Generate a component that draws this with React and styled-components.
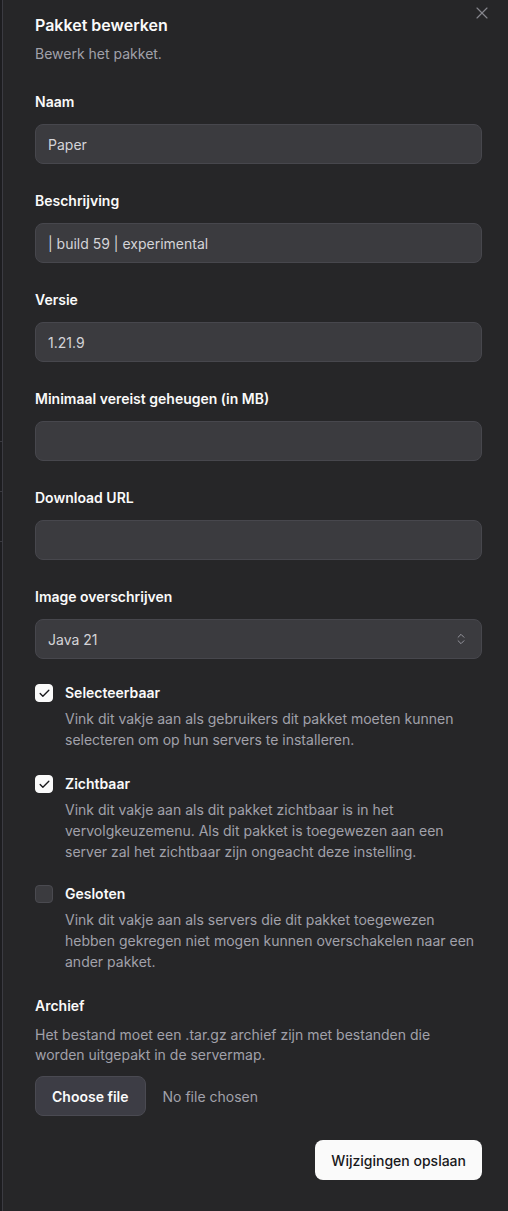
import styled, { createGlobalStyle } from "styled-components";
import { X, Check, ChevronsUpDown } from "lucide-react";

const GlobalStyle = createGlobalStyle`
  * { box-sizing: border-box; }
  html, body { margin: 0; padding: 0; background: #1d1d20; }
  body {
    font-family: Inter, "Noto Sans", "Liberation Sans", sans-serif;
    color: #fafafa;
    -webkit-font-smoothing: antialiased;
  }
`;

const Page = styled.div`
  display: flex;
  min-height: 1211px;
`;

const Backdrop = styled.div`
  width: 2px;
  flex-shrink: 0;
  background: #1d1d20;
  padding-top: 441px;
`;

const BackdropRow = styled.div`
  height: 50px;
  border-top: 1px solid #3a3a40;
`;

const Sheet = styled.div`
  position: relative;
  flex: 1;
  background: #262628;
  border-left: 1px solid #3b3b42;
  padding: 13px 26px 32px 32px;
  display: flex;
  flex-direction: column;
`;

const Close = styled.button`
  position: absolute;
  top: 3px;
  right: 16px;
  background: none;
  border: none;
  padding: 0;
  color: #85858c;
  display: flex;
`;

const Title = styled.h2`
  margin: 0;
  font-size: 16px;
  line-height: 24px;
  font-weight: 600;
  color: #fafafa;
`;

const Subtitle = styled.p`
  margin: 7px 0 0;
  font-size: 14px;
  line-height: 20px;
  color: #a1a1aa;
`;

const Form = styled.form`
  margin-top: 28px;
  display: flex;
  flex-direction: column;
`;

const Field = styled.div`
  display: flex;
  flex-direction: column;
  gap: 12px;
  margin-bottom: ${(p) => p.$mb ?? 27}px;
`;

const Label = styled.label`
  font-size: 14px;
  line-height: 20px;
  font-weight: 600;
  color: #fafafa;
`;

const Input = styled.input`
  height: 40px;
  width: 100%;
  border-radius: 8px;
  border: 1px solid #47474d;
  background: #3b3b3f;
  color: #d4d4d8;
  font-family: inherit;
  font-size: 14px;
  padding: 0 12px;
  outline: none;
`;

const Select = styled.div`
  height: 40px;
  border-radius: 8px;
  border: 1px solid #47474d;
  background: #3b3b3f;
  color: #d4d4d8;
  font-size: 14px;
  padding: 0 13px 0 12px;
  display: flex;
  align-items: center;
  justify-content: space-between;

  svg { color: #a1a1aa; }
`;

const CheckRow = styled.div`
  display: flex;
  gap: 12px;
  margin-bottom: ${(p) => p.$mb}px;
`;

const Box = styled.span`
  width: 18px;
  height: 18px;
  margin-top: 1px;
  flex-shrink: 0;
  border-radius: 4px;
  display: flex;
  align-items: center;
  justify-content: center;
  background: ${(p) => (p.$checked ? "#fafafa" : "#3b3b3f")};
  border: 1px solid ${(p) => (p.$checked ? "#fafafa" : "#4a4a50")};
  color: #18181b;
`;

const CheckText = styled.div`
  display: flex;
  flex-direction: column;
  gap: 5px;
`;

const Help = styled.p`
  margin: 0;
  font-size: 14px;
  line-height: ${(p) => p.$lh || 21}px;
  color: #a1a1aa;
`;

const Archive = styled.div`
  display: flex;
  flex-direction: column;
  gap: 9px;
`;

const FileRow = styled.div`
  margin-top: 2px;
  display: flex;
  align-items: center;
  gap: 17px;
`;

const FileButton = styled.button`
  height: 40px;
  padding: 0 16px;
  border-radius: 8px;
  border: 1px solid #4a4a52;
  background: #3d3d45;
  color: #fafafa;
  font-family: inherit;
  font-size: 14px;
  font-weight: 600;
`;

const FileName = styled.span`
  font-size: 14px;
  color: #a1a1aa;
`;

const Footer = styled.div`
  margin-top: 24px;
  display: flex;
  justify-content: flex-end;
`;

const SaveButton = styled.button`
  height: 40px;
  padding: 0 16px;
  border-radius: 8px;
  border: none;
  background: #fafafa;
  color: #18181b;
  font-family: inherit;
  font-size: 14px;
  font-weight: 500;
`;

const fields = [
  { label: "Naam", value: "Paper" },
  { label: "Beschrijving", value: "| build 59 | experimental" },
  { label: "Versie", value: "1.21.9" },
  { label: "Minimaal vereist geheugen (in MB)", value: "" },
  { label: "Download URL", value: "" },
];

const options = [
  {
    label: "Selecteerbaar",
    checked: true,
    mb: 24,
    help: "Vink dit vakje aan als gebruikers dit pakket moeten kunnen selecteren om op hun servers te installeren.",
  },
  {
    label: "Zichtbaar",
    checked: true,
    mb: 22,
    help: "Vink dit vakje aan als dit pakket zichtbaar is in het vervolgkeuzemenu. Als dit pakket is toegewezen aan een server zal het zichtbaar zijn ongeacht deze instelling.",
  },
  {
    label: "Gesloten",
    checked: false,
    mb: 24,
    help: "Vink dit vakje aan als servers die dit pakket toegewezen hebben gekregen niet mogen kunnen overschakelen naar een ander pakket.",
  },
];

export default function App() {
  return (
    <>
      <GlobalStyle />
      <Page>
        <Backdrop>
          <BackdropRow />
          <BackdropRow />
          <BackdropRow />
        </Backdrop>
        <Sheet>
          <Close type="button" aria-label="Sluiten">
            <X size={20} strokeWidth={1.4} />
          </Close>
          <Title>Pakket bewerken</Title>
          <Subtitle>Bewerk het pakket.</Subtitle>
          <Form onSubmit={(e) => e.preventDefault()}>
            {fields.map((f) => (
              <Field key={f.label}>
                <Label>{f.label}</Label>
                <Input defaultValue={f.value} />
              </Field>
            ))}
            <Field $mb={24}>
              <Label>Image overschrijven</Label>
              <Select>
                <span>Java 21</span>
                <ChevronsUpDown size={14} strokeWidth={1.5} />
              </Select>
            </Field>
            {options.map((o) => (
              <CheckRow key={o.label} $mb={o.mb}>
                <Box $checked={o.checked}>
                  {o.checked && <Check size={13} strokeWidth={2.5} />}
                </Box>
                <CheckText>
                  <Label>{o.label}</Label>
                  <Help>{o.help}</Help>
                </CheckText>
              </CheckRow>
            ))}
            <Archive>
              <Label>Archief</Label>
              <Help $lh={20}>
                Het bestand moet een .tar.gz archief zijn met bestanden die worden uitgepakt in de servermap.
              </Help>
              <FileRow>
                <FileButton type="button">Choose file</FileButton>
                <FileName>No file chosen</FileName>
              </FileRow>
            </Archive>
            <Footer>
              <SaveButton type="submit">Wijzigingen opslaan</SaveButton>
            </Footer>
          </Form>
        </Sheet>
      </Page>
    </>
  );
}
